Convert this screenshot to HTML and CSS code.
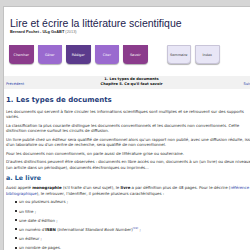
FILE: index.html
```html
<!DOCTYPE html>
<html lang="fr">
<head>
    <meta charset="UTF-8">
    <title>1. Les types de documents</title>
    <link rel="stylesheet" href="styles.css">
</head>
<body>
    <div class="page">
        <header class="header">
            <h1 class="site-title">Lire et écrire la littérature scientifique</h1>
            <p class="site-author"><b>Bernard Pochet - ULg GxABT</b> (2013)</p>
        </header>

        <nav class="menu">
            <a class="tab tab-magenta" href="#">Chercher</a>
            <a class="tab tab-violet" href="#">Gérer</a>
            <a class="tab tab-dark" href="#">Rédiger</a>
            <a class="tab tab-violet" href="#">Citer</a>
            <a class="tab tab-magenta" href="#">Savoir</a>
            <a class="tab tab-light tab-sommaire" href="#">Sommaire</a>
            <a class="tab tab-light" href="#">Index</a>
        </nav>

        <div class="navheader">
            <div class="nav-title">1. Les types de documents</div>
            <div class="nav-row">
                <a class="nav-prev" href="#">Précédent</a>
                <span class="nav-chapter">Chapitre 5. Ce qu'il faut savoir</span>
                <a class="nav-next" href="#">Suivant</a>
            </div>
        </div>

        <div class="content">
            <h2 class="section-title">1. Les types de documents</h2>
            <p>Les documents qui servent à faire circuler les informations scientifiques sont multiples et se retrouvent sur des supports variés.</p>
            <p>La classification la plus courante distingue les documents conventionnels et les documents non conventionnels. Cette distinction concerne surtout les circuits de diffusion.</p>
            <p>Un livre publié chez un éditeur sera qualifié de conventionnel alors qu'un rapport non publié, avec une diffusion réduite, issu d'un laboratoire ou d'un centre de recherche, sera qualifié de non conventionnel.</p>
            <p>Pour les documents non conventionnels, on parle aussi de littérature grise ou souterraine.</p>
            <p>D'autres distinctions peuvent être observées : documents en libre accès ou non, documents à un (un livre) ou deux niveaux (un article dans un périodique), documents électroniques ou imprimés...</p>

            <h3 class="sub-title">a. Le livre</h3>
            <p>Aussi appelé <b>monographie</b> (s'il traite d'un seul sujet), le <b>livre</b> a par définition plus de 48 pages. Pour le décrire (<a href="#">référence bibliographique</a>), le retrouver, l'identifier, il présente plusieurs caractéristiques :</p>
            <ul class="features">
                <li>un ou plusieurs auteurs ;</li>
                <li>un titre ;</li>
                <li>une date d'édition ;</li>
                <li>un numéro d'<b>ISBN</b> (<i>International Standard Book Number</i>)<sup><a href="#">[28]</a></sup> ;</li>
                <li>un éditeur ;</li>
                <li>un nombre de pages.</li>
            </ul>
        </div>
    </div>
</body>
</html>
```

FILE: styles.css
```css
* {
    margin: 0;
    padding: 0;
    box-sizing: border-box;
}

body {
    background-color: #d6d6d6;
    font-family: "DejaVu Sans", Verdana, sans-serif;
    color: #333;
    overflow: hidden;
}

a {
    color: #2b3fa8;
    text-decoration: none;
}

.page {
    width: 256px;
    margin: 6px 0 0 3px;
    background-color: #fff;
    border-top: 1px solid #c2c2c2;
    border-left: 1px solid #c2c2c2;
}

/* en-tete */

.header {
    padding: 10px 6px 0 6px;
}

.site-title {
    font-family: "Liberation Sans", Arial, sans-serif;
    font-weight: normal;
    font-size: 10.5px;
    line-height: 12px;
    color: #1c1c4e;
}

.site-author {
    font-family: "Liberation Sans", Arial, sans-serif;
    font-size: 3.9px;
    line-height: 6px;
    color: #777;
}

.site-author b {
    color: #222;
}

/* menu */

.menu {
    display: flex;
    gap: 4px;
    padding: 10px 0 0 5px;
}

.tab {
    display: flex;
    align-items: center;
    justify-content: center;
    width: 24.5px;
    height: 19px;
    border-radius: 0 0 4px 4px;
    font-size: 3.4px;
    color: #fff;
    box-shadow: 0 1px 1px rgba(0, 0, 0, 0.3);
}

.tab-magenta {
    background-color: #8b3c8c;
}

.tab-violet {
    background-color: #9a6acf;
}

.tab-dark {
    background-color: #5b3b8c;
}

.tab-light {
    background-color: #e8e6f6;
    color: #333;
    border: 1px solid #c8c4d8;
}

.tab-sommaire {
    margin-left: 15px;
}

/* barre de navigation */

.navheader {
    margin-top: 11.5px;
    background-color: #f1f1f1;
    padding: 1px 2px 1px 2px;
    font-size: 3.6px;
    line-height: 5.5px;
    color: #111;
}

.nav-title {
    text-align: center;
    font-weight: bold;
}

.nav-row {
    display: grid;
    grid-template-columns: 1fr 3fr 1fr;
}

.nav-chapter {
    text-align: center;
    font-weight: bold;
}

.nav-next {
    text-align: right;
}

/* contenu */

.content {
    padding: 6px 2px 0 2px;
    font-size: 3.95px;
    line-height: 5.3px;
}

.content p {
    margin-bottom: 3.4px;
}

.content b {
    color: #111;
}

.section-title {
    font-size: 7px;
    line-height: 10px;
    color: #1f3d7a;
    margin-bottom: 4.3px;
}

.sub-title {
    font-size: 6.3px;
    line-height: 9px;
    color: #22558f;
    margin: 3px 0 3px 0;
}

.features {
    list-style: none;
    padding-left: 9px;
    margin-top: 1.5px;
}

.features li {
    position: relative;
    padding-left: 4px;
    margin-bottom: 3.8px;
}

.features li::before {
    content: "";
    position: absolute;
    left: 0;
    top: 1.7px;
    width: 2px;
    height: 2px;
    background-color: #333;
}

.features sup {
    font-size: 2.6px;
    line-height: 0;
}
```
